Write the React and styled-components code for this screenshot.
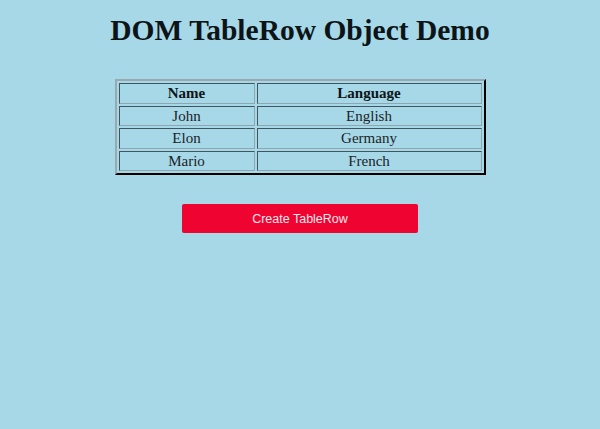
import React from "react";
import styled, { createGlobalStyle } from "styled-components";

const GlobalStyle = createGlobalStyle`
  body {
    margin: 0;
    background: #a6d8e7;
    font-family: "Liberation Serif", "Times New Roman", serif;
  }
`;

const rows = [
  { name: "John", language: "English" },
  { name: "Elon", language: "Germany" },
  { name: "Mario", language: "French" }
];

const App = () => {
  return (
    <>
      <GlobalStyle />
      <Page>
        <Title>DOM TableRow Object Demo</Title>
        <Table>
          <thead>
            <tr>
              <HeadCell width="134">Name</HeadCell>
              <HeadCell>Language</HeadCell>
            </tr>
          </thead>
          <tbody>
            {rows.map(row => (
              <tr key={row.name}>
                <Cell>{row.name}</Cell>
                <Cell>{row.language}</Cell>
              </tr>
            ))}
          </tbody>
        </Table>
        <Button>Create TableRow</Button>
      </Page>
    </>
  );
};

const Page = styled.div`
  display: flex;
  flex-direction: column;
  align-items: center;
  min-height: 429px;
  padding-top: 13px;
  box-sizing: border-box;
`;

const Title = styled.h1`
  margin: 0 0 32px;
  font-size: 29.5px;
  line-height: 34px;
  font-weight: bold;
  color: #0d1418;
`;

const Table = styled.table`
  width: 371px;
  border: 2px outset #8a9aa2;
  border-color: #9aa9b0 #1f2d35 #1f2d35 #9aa9b0;
  border-spacing: 2px;
  font-size: 15px;
  color: #1c2328;
`;

const Cell = styled.td`
  border: 1px solid;
  border-color: #3f5560 #8fa6b0 #8fa6b0 #3f5560;
  padding: 0;
  height: 18.5px;
  line-height: 18.5px;
  text-align: center;
`;

const HeadCell = styled(Cell).attrs({ as: "th" })`
  width: ${props => (props.width ? `${props.width}px` : "auto")};
  font-weight: bold;
  color: #0d1418;
`;

const Button = styled.button`
  margin-top: 29px;
  width: 236px;
  height: 29px;
  border: none;
  border-radius: 2px;
  background: #ee0331;
  color: #ffe8ec;
  font-family: "Liberation Sans", Arial, sans-serif;
  font-size: 12.5px;
  cursor: pointer;
`;

export default App;
